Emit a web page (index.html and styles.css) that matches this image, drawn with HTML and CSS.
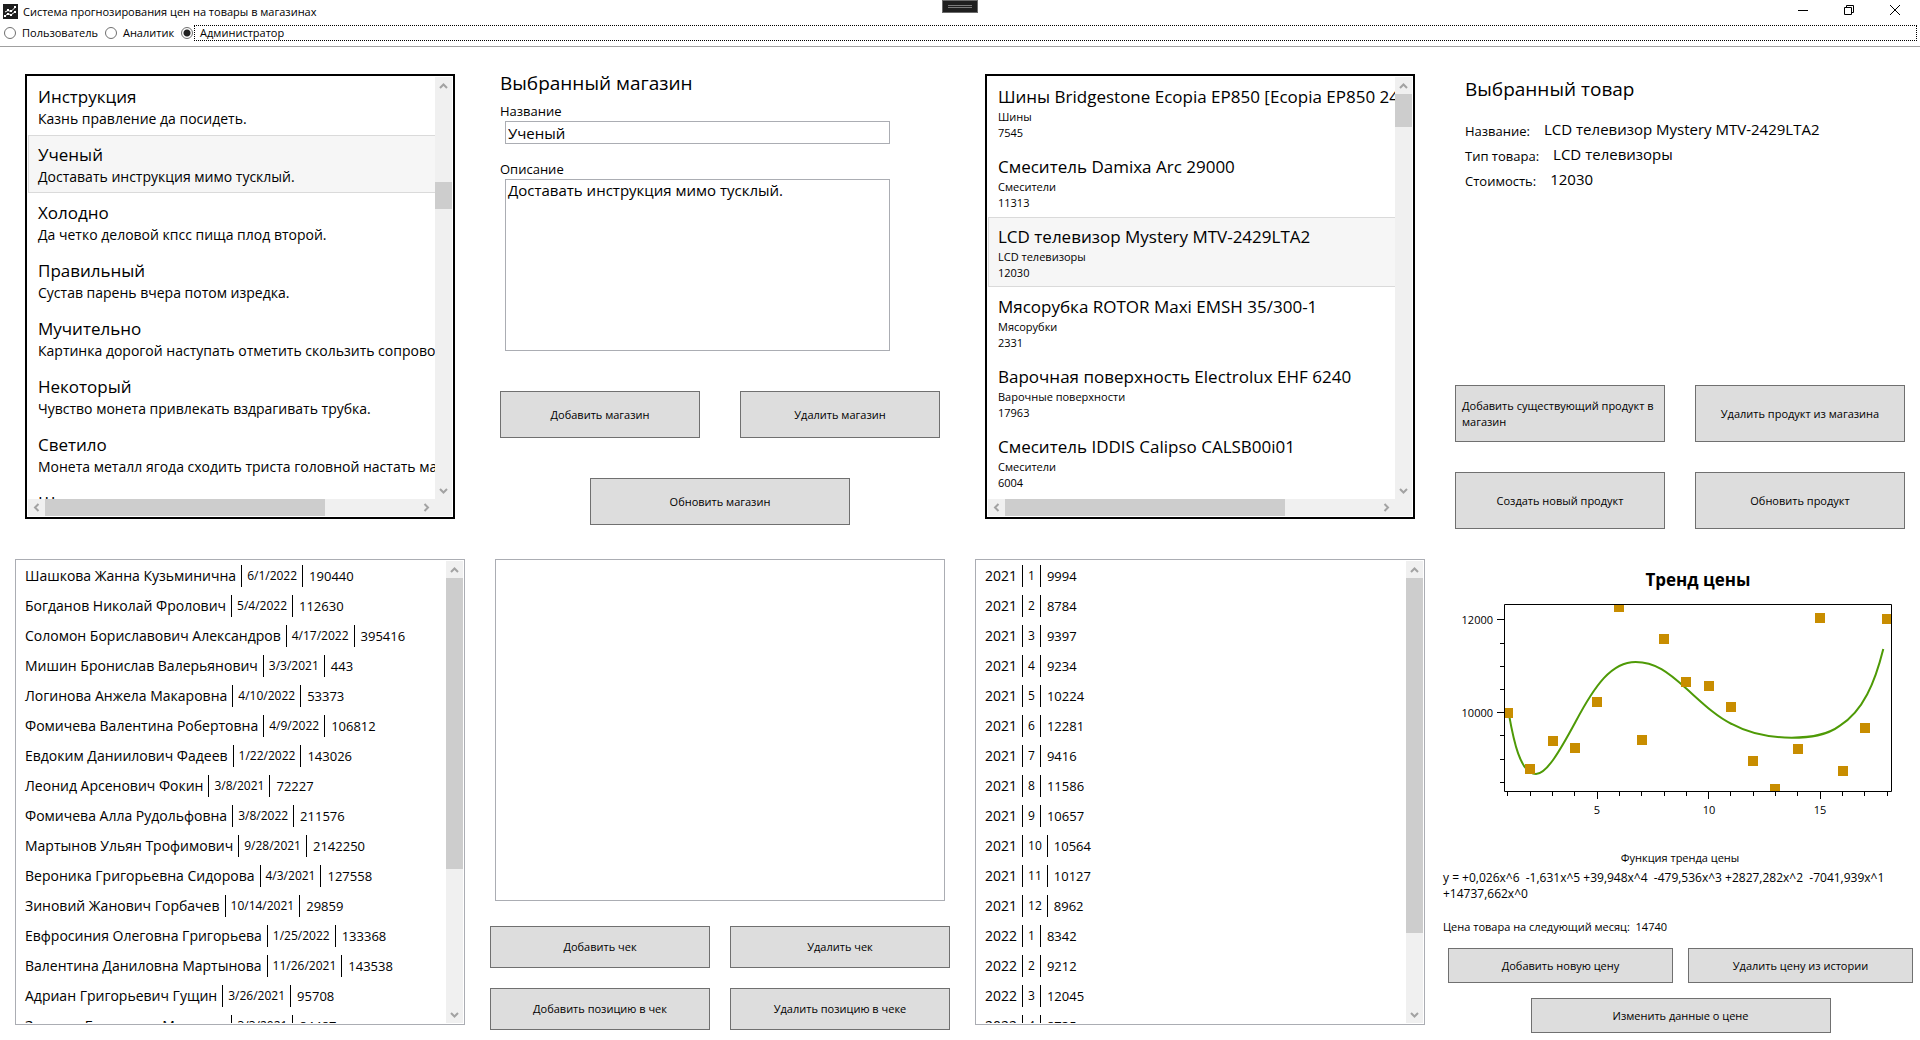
FILE: index.html
```html
<!DOCTYPE html>
<html lang="ru">
<head>
<meta charset="utf-8">
<title>Система прогнозирования цен на товары в магазинах</title>
<link rel="stylesheet" href="styles.css">
</head>
<body>
<svg class="sprite" aria-hidden="true">
  <symbol id="chev-up" viewBox="0 0 17 17"><path d="M5 11 8.500 7.500 12 11" fill="none" stroke="#a3a3a3" stroke-width="2"/></symbol>
  <symbol id="chev-down" viewBox="0 0 17 17"><path d="M5 7 8.500 10.500 12 7" fill="none" stroke="#a3a3a3" stroke-width="2"/></symbol>
  <symbol id="chev-left" viewBox="0 0 17 17"><path d="M10.500 5 7 8.500 10.500 12" fill="none" stroke="#a3a3a3" stroke-width="2"/></symbol>
  <symbol id="chev-right" viewBox="0 0 17 17"><path d="M6.500 5 10 8.500 6.500 12" fill="none" stroke="#a3a3a3" stroke-width="2"/></symbol>
</svg>

<header class="titlebar">
  <svg class="app-icon" viewBox="0 0 15 15" aria-hidden="true">
    <rect width="15" height="15" fill="#1e1e1e"/>
    <path d="M2 12 5 9.500 8 11 13 7M2 8 5 6.500 8 7.500 12.500 3" fill="none" stroke="#fff" stroke-width="1"/>
    <path d="M1 11h2v2H1zM4 9h2v2H4zM7 10h2v2H7zM11 7h2v2h-2zM4 5h2v2H4zM7 6h2v2H7zM11 2h2v2h-2z" fill="#fff"/>
  </svg>
  <h1 class="app-title">Система прогнозирования цен на товары в магазинах</h1>
  <button class="win-btn" aria-label="Свернуть"><svg width="10" height="10" viewBox="0 0 10 10"><path d="M0 5.500h10" stroke="#000"/></svg></button>
  <button class="win-btn" aria-label="Восстановить"><svg width="10" height="10" viewBox="0 0 10 10"><path d="M.5 2.500h7v7h-7zM2.500 2.500v-2h7v7h-2" fill="none" stroke="#000"/></svg></button>
  <button class="win-btn" aria-label="Закрыть"><svg width="10" height="10" viewBox="0 0 10 10"><path d="M0 0 10 10M10 0 0 10" stroke="#000"/></svg></button>
  <div class="debug-grip"><i></i><i></i></div>
</header>

<nav class="roles">
  <input type="radio" name="role" id="role-user"><label for="role-user">Пользователь</label>
  <input type="radio" name="role" id="role-analyst"><label for="role-analyst">Аналитик</label>
  <input type="radio" name="role" id="role-admin" checked><label class="focused" for="role-admin">Администратор</label>
</nav>

<main class="board">
  <section class="listbox framed">
    <ul class="items">
      <li><b>Инструкция</b><span>Казнь правление да посидеть.</span></li>
      <li class="selected"><b>Ученый</b><span>Доставать инструкция мимо тусклый.</span></li>
      <li><b>Холодно</b><span>Да четко деловой кпсс пища плод второй.</span></li>
      <li><b>Правильный</b><span>Сустав парень вчера потом изредка.</span></li>
      <li><b>Мучительно</b><span>Картинка дорогой наступать отметить скользить сопровождаться</span></li>
      <li><b>Некоторый</b><span>Чувство монета привлекать вздрагивать трубка.</span></li>
      <li><b>Светило</b><span>Монета металл ягода сходить триста головной настать магазин</span></li>
      <li><b>Ше</b></li>
    </ul>
    <div class="vbar"><svg><use href="#chev-up"/></svg><div class="track"><i class="thumb" style="margin-top:88px;height:27px"></i></div><svg><use href="#chev-down"/></svg></div>
    <div class="hbar"><svg><use href="#chev-left"/></svg><div class="track"><i class="thumb" style="width:75%"></i></div><svg><use href="#chev-right"/></svg></div>
  </section>

  <section class="shop">
    <div class="shop-form">
      <h2>Выбранный магазин</h2>
      <label for="shop-name">Название</label>
      <input type="text" id="shop-name" value="Ученый">
      <label for="shop-about">Описание</label>
      <textarea id="shop-about">Доставать инструкция мимо тусклый.</textarea>
    </div>
    <div class="actions">
      <button>Добавить магазин</button>
      <button>Удалить магазин</button>
      <button class="wide">Обновить магазин</button>
    </div>
  </section>

  <section class="listbox framed">
    <ul class="items goods">
      <li><b>Шины Bridgestone Ecopia EP850 [Ecopia EP850 245/70]</b><span>Шины</span><span>7545</span></li>
      <li><b>Смеситель Damixa Arc 29000</b><span>Смесители</span><span>11313</span></li>
      <li class="selected"><b>LCD телевизор Mystery MTV-2429LTA2</b><span>LCD телевизоры</span><span>12030</span></li>
      <li><b>Мясорубка ROTOR Maxi EMSH 35/300-1</b><span>Мясорубки</span><span>2331</span></li>
      <li><b>Варочная поверхность Electrolux EHF 6240</b><span>Варочные поверхности</span><span>17963</span></li>
      <li><b>Смеситель IDDIS Calipso CALSB00i01</b><span>Смесители</span><span>6004</span></li>
    </ul>
    <div class="vbar"><svg><use href="#chev-up"/></svg><div class="track"><i class="thumb" style="height:33px"></i></div><svg><use href="#chev-down"/></svg></div>
    <div class="hbar"><svg><use href="#chev-left"/></svg><div class="track"><i class="thumb" style="width:75%"></i></div><svg><use href="#chev-right"/></svg></div>
  </section>

  <section class="product">
    <div class="product-info">
      <h2>Выбранный товар</h2>
      <dl>
        <div><dt>Название:</dt><dd>LCD телевизор Mystery MTV-2429LTA2</dd></div>
        <div><dt>Тип товара:</dt><dd>LCD телевизоры</dd></div>
        <div><dt>Стоимость:</dt><dd>12030</dd></div>
      </dl>
    </div>
    <div class="actions">
      <button class="two-line">Добавить существующий продукт в магазин</button>
      <button>Удалить продукт из магазина</button>
      <button>Создать новый продукт</button>
      <button>Обновить продукт</button>
    </div>
  </section>

  <section class="listbox">
    <ul class="rows">
      <li><span>Шашкова Жанна Кузьминична</span><small>6/1/2022</small><span class="num">190440</span></li>
      <li><span>Богданов Николай Фролович</span><small>5/4/2022</small><span class="num">112630</span></li>
      <li><span>Соломон Бориславович Александров</span><small>4/17/2022</small><span class="num">395416</span></li>
      <li><span>Мишин Бронислав Валерьянович</span><small>3/3/2021</small><span class="num">443</span></li>
      <li><span>Логинова Анжела Макаровна</span><small>4/10/2022</small><span class="num">53373</span></li>
      <li><span>Фомичева Валентина Робертовна</span><small>4/9/2022</small><span class="num">106812</span></li>
      <li><span>Евдоким Даниилович Фадеев</span><small>1/22/2022</small><span class="num">143026</span></li>
      <li><span>Леонид Арсенович Фокин</span><small>3/8/2021</small><span class="num">72227</span></li>
      <li><span>Фомичева Алла Рудольфовна</span><small>3/8/2022</small><span class="num">211576</span></li>
      <li><span>Мартынов Ульян Трофимович</span><small>9/28/2021</small><span class="num">2142250</span></li>
      <li><span>Вероника Григорьевна Сидорова</span><small>4/3/2021</small><span class="num">127558</span></li>
      <li><span>Зиновий Жанович Горбачев</span><small>10/14/2021</small><span class="num">29859</span></li>
      <li><span>Евфросиния Олеговна Григорьева</span><small>1/25/2022</small><span class="num">133368</span></li>
      <li><span>Валентина Даниловна Мартынова</span><small>11/26/2021</small><span class="num">143538</span></li>
      <li><span>Адриан Григорьевич Гущин</span><small>3/26/2021</small><span class="num">95708</span></li>
      <li><span>Захаров Бронислав Минович</span><small>3/3/2021</small><span class="num">84487</span></li>
    </ul>
    <div class="vbar"><svg><use href="#chev-up"/></svg><div class="track"><i class="thumb" style="height:68%"></i></div><svg><use href="#chev-down"/></svg></div>
  </section>

  <section class="receipt">
    <div class="positions"></div>
    <div class="actions">
      <button>Добавить чек</button>
      <button>Удалить чек</button>
      <button>Добавить позицию в чек</button>
      <button>Удалить позицию в чеке</button>
    </div>
  </section>

  <section class="listbox">
    <ul class="rows">
      <li><span>2021</span><small>1</small><span class="num">9994</span></li>
      <li><span>2021</span><small>2</small><span class="num">8784</span></li>
      <li><span>2021</span><small>3</small><span class="num">9397</span></li>
      <li><span>2021</span><small>4</small><span class="num">9234</span></li>
      <li><span>2021</span><small>5</small><span class="num">10224</span></li>
      <li><span>2021</span><small>6</small><span class="num">12281</span></li>
      <li><span>2021</span><small>7</small><span class="num">9416</span></li>
      <li><span>2021</span><small>8</small><span class="num">11586</span></li>
      <li><span>2021</span><small>9</small><span class="num">10657</span></li>
      <li><span>2021</span><small>10</small><span class="num">10564</span></li>
      <li><span>2021</span><small>11</small><span class="num">10127</span></li>
      <li><span>2021</span><small>12</small><span class="num">8962</span></li>
      <li><span>2022</span><small>1</small><span class="num">8342</span></li>
      <li><span>2022</span><small>2</small><span class="num">9212</span></li>
      <li><span>2022</span><small>3</small><span class="num">12045</span></li>
      <li><span>2022</span><small>4</small><span class="num">8735</span></li>
    </ul>
    <div class="vbar"><svg><use href="#chev-up"/></svg><div class="track"><i class="thumb" style="height:83%"></i></div><svg><use href="#chev-down"/></svg></div>
  </section>

  <section class="trend">
    <svg class="chart" viewBox="10 0 480 282" role="img" aria-label="Тренд цены">
      <clipPath id="plot"><rect x="74" y="55" width="388" height="187"/></clipPath>
      <text class="chart-title" x="268" y="37">Тренд цены</text>
      <g clip-path="url(#plot)">
        <g transform="scale(.3333)"><path d="M237 497C250 570 270 675 318 675C350 675 390 605 436 520C495 408 545 339 617 339C675 339 715 370 768 418C815 460 855 500 905 525C960 555 1020 566 1085 566C1140 566 1190 560 1230 530C1300 486 1335 400 1360 300" fill="none" stroke="#4e9a06" stroke-width="6"/></g>
        <path fill="#c88d00" d="M73 159h10v10h-10zM95 215h10v10h-10zM118 187h10v10h-10zM140 194h10v10h-10zM162 148h10v10h-10zM184 53h10v10h-10zM207 186h10v10h-10zM229 85h10v10h-10zM251 128h10v10h-10zM274 132h10v10h-10zM296 153h10v10h-10zM318 207h10v10h-10zM340 235h10v10h-10zM363 195h10v10h-10zM385 64h10v10h-10zM408 217h10v10h-10zM430 174h10v10h-10zM452 65h10v10h-10z"/>
      </g>
      <path fill="none" stroke="#000" d="M74.500 55.500h387v187h-387zM67 70.500h7M67 163.500h7M70 94.500h4M70 117.500h4M70 140.500h4M70 186.500h4M70 210.500h4M70 233.500h4M77.500 243v4M100.500 243v4M122.500 243v4M144.500 243v4M167.500 243v7M189.500 243v4M211.500 243v4M234.500 243v4M256.500 243v4M278.500 243v7M300.500 243v4M323.500 243v4M345.500 243v4M367.500 243v4M390.500 243v7M412.500 243v4M434.500 243v4M457.500 243v4"/>
      <g class="chart-label">
        <text x="63" y="75" text-anchor="end">12000</text>
        <text x="63" y="168" text-anchor="end">10000</text>
        <text x="167" y="265" text-anchor="middle">5</text>
        <text x="279" y="265" text-anchor="middle">10</text>
        <text x="390" y="265" text-anchor="middle">15</text>
      </g>
    </svg>
    <div class="trend-info">
      <h3>Функция тренда цены</h3>
      <p class="formula">y = +0,026x^6  -1,631x^5 +39,948x^4  -479,536x^3 +2827,282x^2  -7041,939x^1 +14737,662x^0</p>
      <p class="forecast">Цена товара на следующий месяц:  14740</p>
    </div>
    <div class="actions">
      <button>Добавить новую цену</button>
      <button>Удалить цену из истории</button>
      <button class="wide">Изменить данные о цене</button>
    </div>
  </section>
</main>
</body>
</html>
```
FILE: styles.css
```css
* { box-sizing: border-box; }

body {
  margin: 0;
  height: 100vh;
  display: flex;
  flex-direction: column;
  overflow: hidden;
  background: #fff;
  color: #000;
  font: 11px/16px "Open Sans", "Noto Sans", sans-serif;
}

h1, h2, h3, p, ul, dl, dd { margin: 0; padding: 0; font-weight: 400; }
ul { list-style: none; }
.sprite { display: none; }

/* window chrome */
.titlebar {
  position: relative;
  flex: none;
  height: 23px;
  display: flex;
  align-items: center;
  padding: 0 2px 0 3px;
}
.app-icon { width: 15px; height: 15px; margin-right: 5px; }
.app-title { font-size: 11px; flex: 1; }
.win-btn {
  width: 46px;
  height: 20px;
  align-self: flex-start;
  padding: 0;
  border: 0;
  background: none;
  display: flex;
  align-items: center;
  justify-content: center;
}
.debug-grip {
  position: absolute;
  left: calc(50% - 18px);
  top: 0;
  width: 36px;
  height: 13px;
  padding: 4px 5px;
  border: 1px solid #6a6a6a;
  background: #1f1f1f;
}
.debug-grip i { display: block; height: 1px; margin-bottom: 1px; background: #7a7a7a; }

.roles {
  flex: none;
  height: 24px;
  display: flex;
  align-items: center;
  padding: 0 3px 3px 4px;
  border-bottom: 1px solid #a0a0a0;
}
.roles input {
  appearance: none;
  flex: none;
  width: 12px;
  height: 12px;
  margin: 0;
  border: 1px solid #707070;
  border-radius: 50%;
  background: #fff;
}
.roles input:checked { background: radial-gradient(circle, #212121 3px, #fff 4px); }
.roles label { padding: 0 7px 0 6px; }
.roles .focused {
  flex: 1;
  height: 16px;
  line-height: 14px;
  margin-left: 1px;
  padding: 0 5px;
  border: 1px dotted #000;
}

/* workspace */
.board {
  flex: 1;
  min-height: 0;
  margin-top: 1px;
  display: grid;
  grid-template-columns: repeat(4, minmax(0, 1fr));
  grid-template-rows: repeat(2, minmax(0, 1fr));
}
.board > section { min-height: 0; }

button { font-family: inherit; color: inherit; }
.actions { display: grid; grid-template-columns: 1fr 1fr; }
.actions button {
  border: 1px solid #707070;
  background: #ddd;
  padding: 0 6px;
  font-size: 11px;
  line-height: 16px;
}
.actions .wide { grid-column: 1 / 3; justify-self: center; }
.actions .two-line { text-align: left; }

/* list boxes */
.listbox {
  margin: 15px;
  padding: 1px;
  border: 1px solid #abadb3;
  display: grid;
  grid-template-columns: minmax(0, 1fr) 17px;
  grid-template-rows: minmax(0, 1fr);
}
.listbox.framed {
  margin: 26px 25px 25px;
  border: 2px solid #000;
  grid-template-rows: minmax(0, 1fr) 17px;
}
.items, .rows { grid-area: 1 / 1; }
.vbar { grid-area: 1 / 2; }
.hbar { grid-area: 2 / 1 / 3 / 3; padding-right: 17px; }
.vbar, .hbar { display: flex; background: #f0f0f0; }
.vbar { flex-direction: column; }
.vbar svg, .hbar svg { flex: none; width: 17px; height: 17px; }
.track { flex: 1; min-height: 0; display: flex; }
.vbar .track { flex-direction: column; }
.thumb { background: #cdcdcd; flex: none; }

.items, .rows { overflow: hidden; white-space: nowrap; }
.items li {
  height: 58px;
  padding: 7px 9px;
  border: 1px solid transparent;
  border-right: 0;
}
.items .selected { background: #f6f6f6; border-color: #dadada; }
.items b, .items span { display: block; }
.items b { font-weight: 400; font-size: 17px; line-height: 24px; }
.items span { font-size: 14px; line-height: 20px; }
.items.goods li { height: 70px; }
.items.goods span { font-size: 11px; line-height: 16px; }

.rows li {
  height: 30px;
  padding: 4px 8px;
  display: flex;
  font-size: 14px;
  line-height: 22px;
}
.rows small { font-size: 12px; margin-left: 5px; padding: 0 5px; border: solid #000; border-width: 0 1px; }
.rows .num { font-size: 13px; padding-left: 6px; }

h2 { font-size: 19px; line-height: 28px; }

/* selected shop */
.shop { display: flex; flex-direction: column; }
.shop-form { padding: 21px 70px 0 20px; display: flex; flex-direction: column; }
.shop-form label { font-size: 13px; line-height: 20px; padding-top: 4px; }
.shop-form input, .shop-form textarea {
  margin: 0 0 0 5px;
  border: 1px solid #abadb3;
  padding: 0 2px;
  font: 15px/21px "Open Sans", "Noto Sans", sans-serif;
  color: #000;
  border-radius: 0;
}
.shop-form input { height: 23px; margin-bottom: 11px; }
.shop-form textarea { height: 172px; resize: none; }
.shop .actions { padding: 40px 20px 0; gap: 40px; grid-auto-rows: 47px; }
.shop .wide { width: 260px; }

/* selected product */
.product { display: flex; flex-direction: column; justify-content: space-between; }
.product-info { padding: 27px 25px 0; }
.product-info dl { padding-top: 14px; }
.product-info div { display: flex; gap: 14px; height: 25px; }
.product-info dt { font-size: 13px; line-height: 29px; }
.product-info dd { font-size: 15px; line-height: 25px; }
.product .actions { padding: 0 15px 15px; gap: 30px; grid-auto-rows: 57px; }

/* receipt positions */
.receipt { display: flex; flex-direction: column; }
.positions { flex: 1; margin: 15px 15px 25px; border: 1px solid #abadb3; }
.receipt .actions { padding: 0 10px 10px; gap: 20px; grid-auto-rows: 42px; }

/* price trend */
.trend { display: flex; flex-direction: column; justify-content: space-between; }
.chart { display: block; width: 100%; margin-top: 5px; }
.chart-title { font-size: 17px; font-weight: 700; text-anchor: middle; }
.chart-label { font-size: 11px; }
.trend-info { padding: 6px 3px 0; }
.trend-info h3 { font-size: 11px; text-align: center; padding-bottom: 4px; }
.formula, .forecast { white-space: pre-wrap; }
.formula { font-size: 12px; }
.forecast { padding-top: 17px; }
.trend .actions { padding: 0 7px 7px 8px; gap: 15px; grid-auto-rows: 35px; }
.trend .wide { width: 300px; }
```
